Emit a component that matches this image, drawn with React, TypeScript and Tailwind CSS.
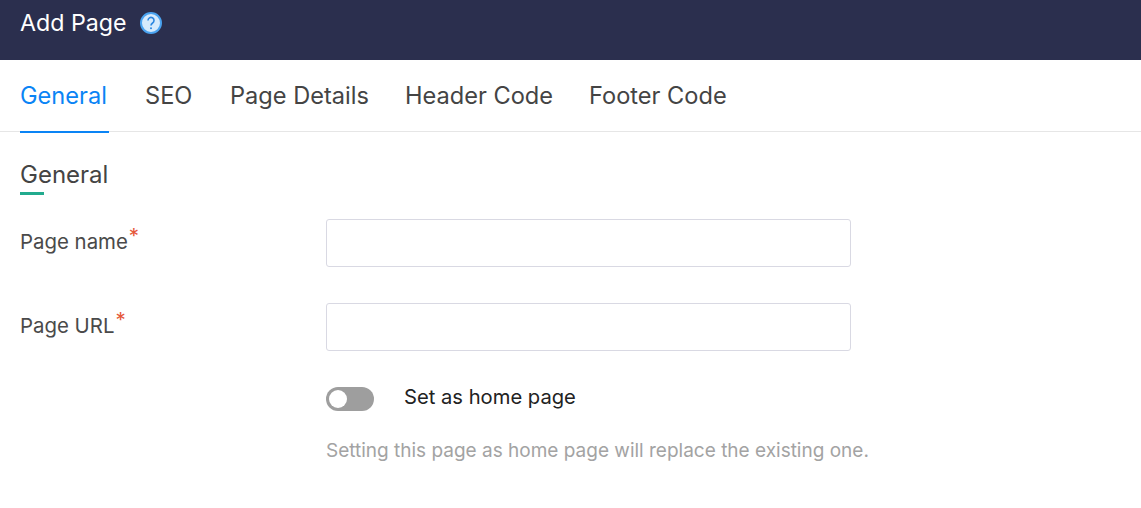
import React from 'react';

const tabs = [
  { label: 'General', width: 'w-[89px]' },
  { label: 'SEO', width: 'w-[49px]' },
  { label: 'Page Details', width: 'w-auto' },
  { label: 'Header Code', width: 'w-auto' },
  { label: 'Footer Code', width: 'w-auto' },
];

const Field: React.FC<{ label: string }> = ({ label }) => (
  <div className="flex items-start mb-9">
    <label className="w-[306px] pt-2 text-[20.4px] leading-[30px] text-[#4a4a4a]">
      {label}
      <span className="text-[#e5583a] relative -top-1.5 ml-px">*</span>
    </label>
    <input className="w-[525px] h-12 border border-[#d9d9e3] rounded-[3px] bg-white" />
  </div>
);

export default function App() {
  return (
    <div className="h-[508px] bg-white overflow-hidden font-['Inter',sans-serif]">
      <div className="h-[60px] bg-[#2b2f4e] flex items-start pl-5 pt-[7px] gap-3.5">
        <span className="text-[23.2px] leading-8 text-white">Add Page</span>
        <svg width="22" height="22" viewBox="0 0 22 22" className="mt-[5px]">
          <circle cx="11" cy="11" r="10" fill="#d6eafc" stroke="#4aa3f0" strokeWidth="2" />
          <path d="M8 8.5a3 3 0 1 1 4.6 2.5c-1 .7-1.6 1.2-1.6 2.5" fill="none" stroke="#2b86e0" strokeWidth="1.6" />
          <circle cx="11" cy="16.2" r="1" fill="#2b86e0" />
        </svg>
      </div>
      <div className="flex gap-9 px-5 h-[72px] border-b border-[#e6e6e6]">
        {tabs.map((t, i) => (
          <div
            key={t.label}
            className={
              i === 0
                ? `${t.width} whitespace-nowrap text-[23.6px] leading-[72px] text-[#0a84f5] border-b-2 border-[#0a84f5] h-[73px]`
                : `${t.width} whitespace-nowrap text-[23.6px] leading-[72px] text-[#444]`
            }
          >
            {t.label}
          </div>
        ))}
      </div>
      <div className="px-5 pt-[25px]">
        <h2 className="text-[24px] leading-[35px] text-[#444] w-fit">General</h2>
        <div className="w-6 h-[3px] bg-[#22ab8e] mb-6" />
        <Field label="Page name" />
        <Field label="Page URL" />
        <div className="ml-[306px] flex items-center gap-[30px]">
          <div className="w-12 h-6 rounded-full bg-[#9e9e9e] flex items-center pl-[3px]">
            <div className="w-[18px] h-[18px] rounded-full bg-white" />
          </div>
          <span className="text-[20.2px] leading-[22px] text-[#222] -mt-1">Set as home page</span>
        </div>
        <p className="ml-[306px] mt-[26px] text-[19px] text-[#a3a3a3]">
          Setting this page as home page will replace the existing one.
        </p>
      </div>
    </div>
  );
}
